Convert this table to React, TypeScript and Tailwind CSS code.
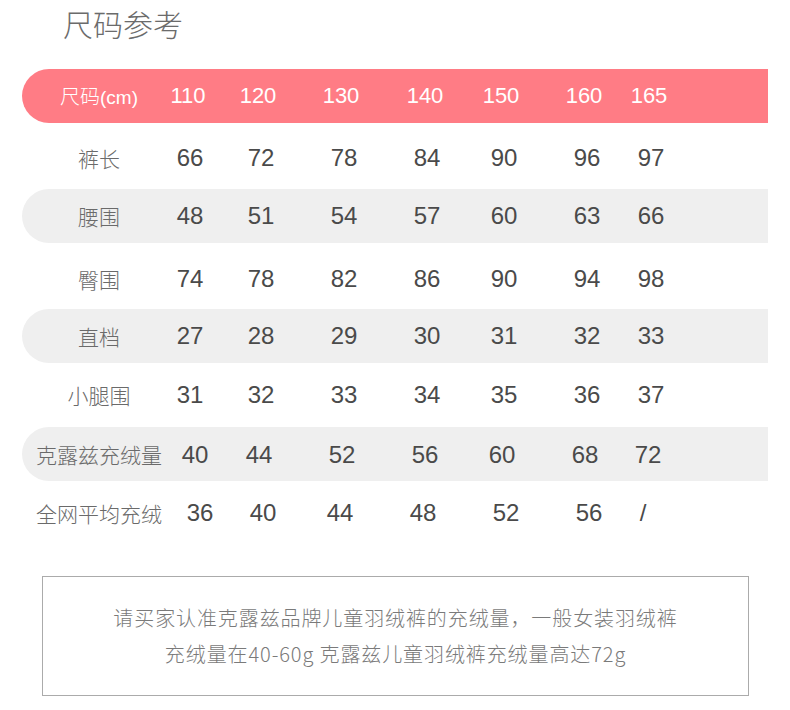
import React from "react";

type Row = {
  label: string;
  values: string[];
  ml: string[];
  gray: boolean;
  h: string;
  pt: string;
};

const CJK = "font-['Noto_Sans_CJK_SC','Noto_Sans',sans-serif]";
const NUM = "font-['Liberation_Sans','Noto_Sans_CJK_SC',sans-serif]";

const headerMl = ["-ml-[2px]", "ml-[30px]", "ml-[43px]", "ml-[44px]", "ml-[36px]", "ml-[43px]", "ml-[25px]"];
const defMl = ["ml-[0px]", "ml-[31px]", "ml-[43px]", "ml-[43px]", "ml-[37px]", "ml-[43px]", "ml-[24px]"];

const rows: Row[] = [
  { label: "裤长", values: ["66", "72", "78", "84", "90", "96", "97"], ml: defMl, gray: false, h: "h-[66px]", pt: "pt-[4px]" },
  { label: "腰围", values: ["48", "51", "54", "57", "60", "63", "66"], ml: defMl, gray: true, h: "h-[54px]", pt: "pt-[0px]" },
  { label: "臀围", values: ["74", "78", "82", "86", "90", "94", "98"], ml: defMl, gray: false, h: "h-[66px]", pt: "pt-[6px]" },
  { label: "直档", values: ["27", "28", "29", "30", "31", "32", "33"], ml: defMl, gray: true, h: "h-[54px]", pt: "pt-[0px]" },
  { label: "小腿围", values: ["31", "32", "33", "34", "35", "36", "37"], ml: defMl, gray: false, h: "h-[64px]", pt: "pt-[0px]" },
  {
    label: "克露兹充绒量",
    values: ["40", "44", "52", "56", "60", "68", "72"],
    ml: ["ml-[5px]", "ml-[24px]", "ml-[43px]", "ml-[43px]", "ml-[37px]", "ml-[43px]", "ml-[23px]"],
    gray: true,
    h: "h-[54px]",
    pt: "pt-[1px]",
  },
  {
    label: "全网平均充绒",
    values: ["36", "40", "44", "48", "52", "56", "/"],
    ml: ["ml-[10px]", "ml-[23px]", "ml-[37px]", "ml-[43px]", "ml-[43px]", "ml-[43px]", "ml-[14px]"],
    gray: false,
    h: "h-[64px]",
    pt: "pt-[0px]",
  },
];

const headerVals = ["110", "120", "130", "140", "150", "160", "165"];

export default function App() {
  return (
    <div className="w-[790px] h-[710px] bg-white overflow-hidden">
      <div className="h-[69px] pl-[63px] pt-[5px]">
        <div className={`${CJK} text-[30px] leading-[36px] font-light text-[#6b6b6b]`}>尺码参考</div>
      </div>

      <div className="ml-[22px] w-[746px]">
        <div className="h-[54px] rounded-l-[27px] bg-[#ff7c85] flex items-center text-white">
          <div className="w-[148px] pl-[6px] text-center leading-none whitespace-nowrap">
            <span className={`${CJK} font-light text-[20px]`}>尺码</span>
            <span className={`${NUM} text-[19px]`}>(cm)</span>
          </div>
          {headerVals.map((v, i) => (
            <div key={v} className={`${headerMl[i]} w-[40px] text-center ${NUM} text-[22px] leading-none`}>
              {v}
            </div>
          ))}
        </div>

        {rows.map((r) => (
          <div
            key={r.label}
            className={`${r.h} ${r.pt} flex items-center ${r.gray ? "bg-[#efefef] rounded-l-[27px]" : ""}`}
          >
            <div className={`w-[148px] pl-[6px] text-center ${CJK} font-light text-[21px] leading-none text-[#6a6a6a] whitespace-nowrap`}>
              {r.label}
            </div>
            {r.values.map((v, i) => (
              <div
                key={i}
                className={`${r.ml[i]} w-[40px] text-center ${NUM} text-[24px] leading-none text-[#4a4a4a]`}
              >
                {v}
              </div>
            ))}
          </div>
        ))}
      </div>

      <div className="ml-[42px] mt-[31px] w-[707px] h-[120px] border border-[#ababab] flex flex-col items-center justify-center">
        <div className={`${CJK} font-light text-[20px] leading-[36px] tracking-[0.9px] text-[#7a7a7a]`}>
          请买家认准克露兹品牌儿童羽绒裤的充绒量，一般女装羽绒裤
        </div>
        <div className={`${CJK} font-light text-[20px] leading-[36px] tracking-[0.9px] text-[#7a7a7a]`}>
          充绒量在40-60g 克露兹儿童羽绒裤充绒量高达72g
        </div>
      </div>
    </div>
  );
}
